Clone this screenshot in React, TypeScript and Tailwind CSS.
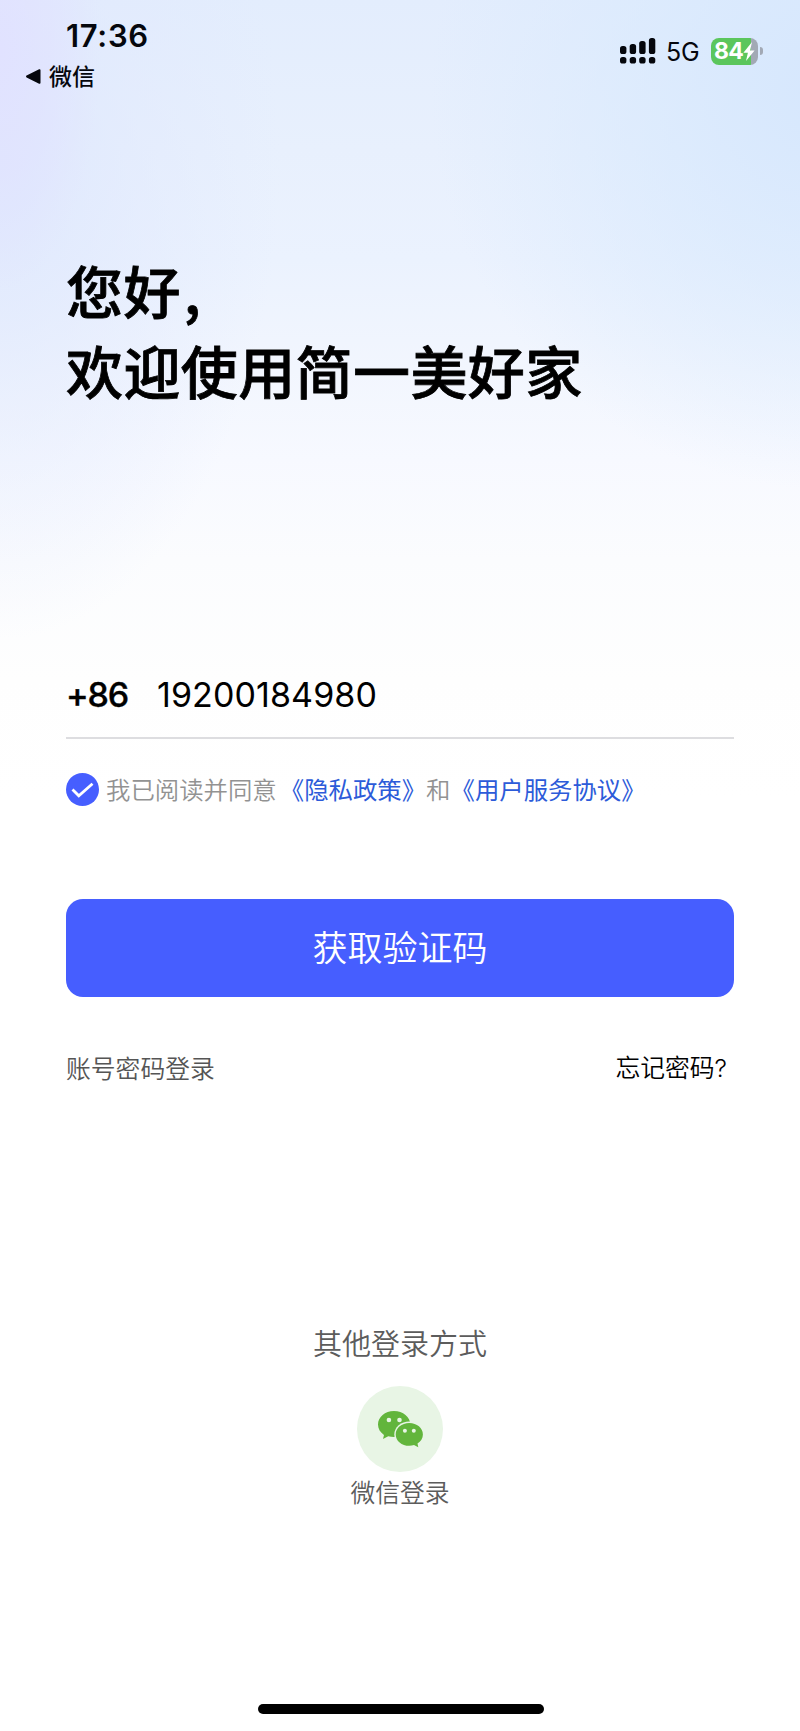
const Bolt = () => (
  <svg viewBox="0 0 12 19" className="h-[19px] w-[12px]" fill="#fff">
    <path d="M9 0 0.400 10.800h4.500L3 19l8.600-10.600H7.100z" />
  </svg>
);

const Signal = () => (
  <svg viewBox="0 0 36 26" className="h-[26px] w-[36px]" fill="#05070d">
    <rect x="0" y="8" width="6.4" height="8" rx="2.6" />
    <rect x="9.7" y="6" width="6.4" height="10" rx="2.6" />
    <rect x="19.2" y="3" width="6.4" height="13" rx="2.6" />
    <rect x="28.9" y="0" width="6.4" height="16" rx="2.6" />
    <rect x="0" y="19" width="6.4" height="6.6" rx="2.6" />
    <rect x="9.7" y="19" width="6.4" height="6.6" rx="2.6" />
    <rect x="19.2" y="19" width="6.4" height="6.6" rx="2.6" />
    <rect x="28.9" y="19" width="6.4" height="6.6" rx="2.6" />
  </svg>
);

const WechatIcon = () => (
  <svg viewBox="0 0 45 37" className="h-[37px] w-[45px]">
    <path
      fill="#62b53c"
      d="M16 0C7 0 0 5.9 0 13.5c0 4.300 2.300 8 6 10.400L5 28l5.200-2.700c1.900.5 3.800.8 5.800.8 9 0 16.300-5.300 16.300-12.600S25 0 16 0z"
    />
    <ellipse cx="31.300" cy="23.400" rx="15" ry="12.900" fill="#e8f5e5" />
    <path
      fill="#62b53c"
      d="M31.300 12c-7.600 0-13.600 5-13.600 11.400s6 11.400 13.600 11.400c1.700 0 3.200-.2 4.700-.7L40.300 36.300l-.8-3.800c3.300-2.100 5.400-5.300 5.400-9.100C44.900 17 38.900 12 31.300 12z"
    />
    <circle cx="10.900" cy="9" r="2.300" fill="#e8f5e5" />
    <circle cx="21.500" cy="9" r="2.300" fill="#e8f5e5" />
    <circle cx="26.900" cy="19.800" r="2" fill="#e8f5e5" />
    <circle cx="35.800" cy="19.800" r="2" fill="#e8f5e5" />
  </svg>
);

const StatusBar = () => (
  <header className="flex h-[100px] justify-between pr-[37px] pl-[26px]">
    <div className="pt-[16px]">
      <div className="pl-[40px] font-['Inter'] text-[31px] leading-[40px] font-semibold tracking-[0.7px]">17:36</div>
      <div className="flex h-[40px] items-center gap-[8px]">
        <svg viewBox="0 0 15 15" className="h-[15px] w-[15px]" fill="#05070d">
          <path d="M14.500 1.200v12.600a1 1 0 0 1-1.400.9L.6 8.400a1 1 0 0 1 0-1.800L13.100.3a1 1 0 0 1 1.400.9z" />
        </svg>
        <span className="pb-[2px] text-[23px] leading-[38px] font-medium">微信</span>
      </div>
    </div>
    <div className="flex h-[102px] items-center">
      <Signal />
      <span className="ml-[10px] w-[35px] pt-[1px] font-['Inter'] text-[25px] leading-[30px] tracking-[-0.2px]">5G</span>
      <div className="ml-[10px] flex h-[27px] w-[47px] items-center justify-center rounded-[8px] bg-linear-to-r from-[#5bc65c] from-85% to-[#a2a9b5] to-85%">
        <span className="font-['Inter'] text-[23px] leading-[27px] font-bold tracking-[-0.8px] text-white">84</span>
        <Bolt />
      </div>
      <div className="ml-[2px] h-[8px] w-[3px] rounded-r-full bg-[#a2a9b5]" />
    </div>
  </header>
);

export default function App() {
  return (
    <div className="flex h-[1731px] w-[800px] flex-col bg-white bg-[radial-gradient(ellipse_100px_240px_at_0px_50px,#e1e2ff_0%,#e1e2ff99_50%,#e1e2ff00_100%),radial-gradient(ellipse_400px_400px_at_830px_90px,#d6e7fd_0%,#d8e9fda6_45%,#dcedfd00_100%),radial-gradient(ellipse_280px_480px_at_0px_160px,#dfe8fd_0%,#e1e9fd80_50%,#e5ecfe00_100%),linear-gradient(to_bottom,#e3edfd_0px,#e8f0fd_150px,#ebf2fe_260px,#f2f6fe_370px,#f7f9ff_460px,#fbfcfe_560px,#fefefe_680px,#ffffff_800px)] bg-[length:800px_800px] bg-no-repeat font-['Noto_Sans_CJK_SC',sans-serif] text-[#05070d]">
      <StatusBar />

      <main className="flex flex-col px-[66px]">
        <h1 className="mt-[149px] text-[57px] leading-[80px] font-medium tracking-[0.4px] whitespace-nowrap text-black [-webkit-text-stroke:0.8px_black]">
          您好<span className="pl-[3px]">,</span>
          <br />
          欢迎使用简一美好家
        </h1>

        <div className="mt-[243px] flex h-[87px] items-center border-b-2 border-[#dddde0] font-['Inter'] text-[34px] text-black">
          <span className="w-[91px] font-medium tracking-[-1.2px] [-webkit-text-stroke:0.4px_black]">+86</span>
          <span className="tracking-[0.1px]">19200184980</span>
        </div>

        <div className="mt-[31px] flex h-[38px] items-center text-[24.4px] whitespace-nowrap">
          <svg viewBox="0 0 33 33" className="h-[33px] w-[33px] shrink-0">
            <circle cx="16.500" cy="16.500" r="16.500" fill="#465eff" />
            <path d="M6.500 16.500l6.300 6.300L26.500 10.800" fill="none" stroke="#fff" strokeWidth="2.800" />
          </svg>
          <span className="ml-[7px] font-[350] text-[#929292]">我已阅读并同意</span>
          <a className="ml-[3px] text-[#2c5bd9]">《隐私政策》</a>
          <span className="font-[350] text-[#929292]">和</span>
          <a className="text-[#2c5bd9]">《用户服务协议》</a>
        </div>

        <button className="mt-[91px] h-[98px] rounded-[17px] bg-[#465eff] pb-[3px] text-[35px] font-[350] text-white">
          获取验证码
        </button>

        <div className="mt-[51px] flex h-[40px] items-center justify-between pr-[7px] text-[24.8px]">
          <a className="font-[350] text-[#555555]">账号密码登录</a>
          <a className="font-[350] text-black">忘记密码<span className="font-['Inter']">?</span></a>
        </div>
      </main>

      <section className="mt-[234px] flex flex-col items-center text-[#5c5c5c]">
        <p className="text-[29px] leading-[40px] font-[350]">其他登录方式</p>
        <div className="mt-[24px] flex h-[86px] w-[86px] items-center justify-center rounded-full bg-[#e8f5e5]">
          <WechatIcon />
        </div>
        <p className="-mt-[1px] text-[24.8px] leading-[40px] font-[350]">微信登录</p>
      </section>

      <div className="mt-auto mb-[17px] ml-[1px] h-[10px] w-[286px] self-center rounded-full bg-black" />
    </div>
  );
}
